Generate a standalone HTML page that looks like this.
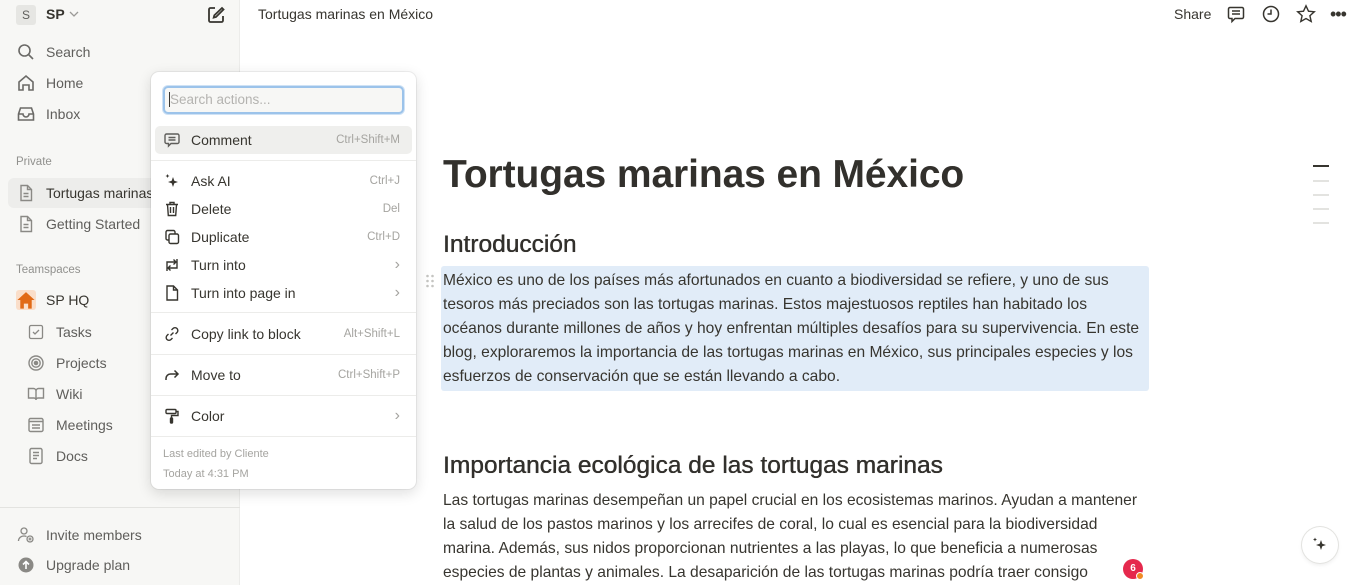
<!DOCTYPE html>
<html><head><meta charset="utf-8">
<style>
*{box-sizing:border-box;margin:0;padding:0}
body{width:1349px;height:585px;overflow:hidden;font-family:"Liberation Sans",sans-serif;background:#fff;position:relative;color:#37352f}
.sb{position:absolute;left:0;top:0;width:240px;height:585px;background:#f7f7f5;border-right:1px solid #ececea}
.it{position:absolute;left:16px;font-size:14px;color:#5f5e5b;display:flex;align-items:center;gap:10px;height:20px}
.it svg{width:20px;height:20px;flex:none}
.sec{position:absolute;left:16px;font-size:11.5px;color:#91918e}
.sub{left:26px}
.top{position:absolute;left:258px;top:6px;font-size:14px;color:#37352f}
.menu{position:absolute;left:151px;top:72px;width:265px;height:417px;background:#fff;border-radius:8px;box-shadow:0 0 0 1px rgba(15,15,15,.06),0 4px 14px rgba(15,15,15,.14)}
.srch{position:absolute;left:12px;top:14px;width:241px;height:28px;border:2px solid #9cc3ea;border-radius:5px;background:#f7f7f5;font-size:13.5px;color:#b4b3b0;padding:4px 4px;box-shadow:0 0 0 1px #cfe2f5}
.mi{position:absolute;left:4px;width:257px;height:28px;display:flex;align-items:center;font-size:14px;color:#37352f;border-radius:5px}
.mi svg{width:18px;height:18px;margin-left:8px;margin-right:10px;flex:none}
.mi .k{margin-left:auto;margin-right:12px;font-size:11.5px;color:#a5a4a0}
.mi .ar{margin-left:auto;margin-right:12px;color:#a5a4a0;font-size:16px}
.hr{position:absolute;left:0;width:265px;height:1px;background:#ececea}
h1{position:absolute;left:443px;top:153px;font-size:39px;font-weight:700;color:#32302c;letter-spacing:-.1px}
h2{position:absolute;left:443px;font-size:24.5px;font-weight:400;color:#32302c;text-shadow:0 0 .4px #32302c,.3px 0 0 #32302c}
.p{position:absolute;left:443px;font-size:15.6px;line-height:24px;color:#37352f;white-space:nowrap}
.hl{position:absolute;left:441px;top:266px;width:708px;height:125px;background:#e1ecf8;border-radius:3px}
</style></head><body>
<div class="sb">
  <div style="position:absolute;left:16px;top:5px;width:20px;height:20px;background:#e6e6e3;border-radius:3px;font-size:12px;color:#5f5e5b;text-align:center;line-height:20px">S</div>
  <div style="position:absolute;left:46px;top:6px;font-size:14px;font-weight:700;color:#37352f">SP</div>
  <svg style="position:absolute;left:69px;top:10px" width="10" height="8" viewBox="0 0 10 8" fill="none" stroke="#9b9a97" stroke-width="1.3"><path d="M1 2l4 4 4-4"/></svg>
  <svg style="position:absolute;left:206px;top:5px" width="20" height="20" viewBox="0 0 20 20" fill="none" stroke="#37352f" stroke-width="1.8"><path d="M9 3H4.5A1.5 1.5 0 0 0 3 4.5v11A1.5 1.5 0 0 0 4.5 17h11a1.5 1.5 0 0 0 1.5-1.5V11"/><path d="M16 3l1.5 1.5L10 12l-2.3.6.6-2.3z"/></svg>
  <div class="it" style="top:42px"><svg viewBox="0 0 20 20" fill="none" stroke="#6b6a67" stroke-width="1.6"><circle cx="8.5" cy="8.5" r="5.5"/><path d="M12.5 12.5l4.5 4.5"/></svg><span style="color:#5f5e5b">Search</span></div>
  <div class="it" style="top:73px"><svg viewBox="0 0 20 20" fill="none" stroke="#6b6a67" stroke-width="1.6"><path d="M3 9l7-6 7 6v8h-4v-5H7v5H3z"/></svg>Home</div>
  <div class="it" style="top:104px"><svg viewBox="0 0 20 20" fill="none" stroke="#6b6a67" stroke-width="1.6"><path d="M2.5 10l2-6h11l2 6v6h-15z M2.5 10h4.5a3 3 0 0 0 6 0h4.5"/></svg>Inbox</div>
  <div class="sec" style="top:156px">Private</div>
  <div style="position:absolute;left:8px;top:178px;width:232px;height:30px;background:#ededeb;border-radius:6px"></div>
  <div class="it" style="top:183px;color:#37352f"><svg viewBox="0 0 20 20" fill="none" stroke="#8a8985" stroke-width="1.4"><path d="M5 2.5h6.5L15.5 6.5v11h-10.5z"/><path d="M11.5 2.5v4h4M7.5 10.5h5M7.5 13.5h5"/></svg>Tortugas marinas</div>
  <div class="it" style="top:214px"><svg viewBox="0 0 20 20" fill="none" stroke="#8a8985" stroke-width="1.4"><path d="M5 2.5h6.5L15.5 6.5v11h-10.5z"/><path d="M11.5 2.5v4h4M7.5 10.5h5M7.5 13.5h5"/></svg>Getting Started</div>
  <div class="sec" style="top:264px">Teamspaces</div>
  <div class="it" style="top:290px"><span style="width:20px;height:20px;background:#fadec9;border-radius:3px;display:flex;align-items:center;justify-content:center"><svg width="14" height="14" viewBox="0 0 14 14"><path d="M1 7l6-5.5L13 7h-2v6H8.5V9.5h-3V13H3V7z" fill="#e16a16"/></svg></span><span style="color:#37352f">SP HQ</span></div>
  <div class="it sub" style="top:322px"><svg viewBox="0 0 20 20" fill="none" stroke="#8a8985" stroke-width="1.3"><rect x="3.5" y="3.5" width="13" height="13" rx="1.5"/><path d="M7 10l2 2 4-4"/></svg>Tasks</div>
  <div class="it sub" style="top:353px"><svg viewBox="0 0 20 20" fill="none" stroke="#8a8985" stroke-width="1.4"><circle cx="10" cy="10" r="7"/><circle cx="10" cy="10" r="4.2"/><circle cx="10" cy="10" r="1.6" fill="#8a8985"/></svg>Projects</div>
  <div class="it sub" style="top:384px"><svg viewBox="0 0 20 20" fill="none" stroke="#8a8985" stroke-width="1.4"><path d="M2.5 4.5h5a2.5 2.5 0 0 1 2.5 2.5v9a2 2 0 0 0-2-2h-5.5zM17.5 4.5h-5A2.5 2.5 0 0 0 10 7v9a2 2 0 0 1 2-2h5.5z"/></svg>Wiki</div>
  <div class="it sub" style="top:415px"><svg viewBox="0 0 20 20" fill="none" stroke="#8a8985" stroke-width="1.4"><rect x="3" y="3.5" width="14" height="13" rx="1.5"/><path d="M3 6.5h14M6 10h8M6 13h8"/></svg>Meetings</div>
  <div class="it sub" style="top:446px"><svg viewBox="0 0 20 20" fill="none" stroke="#8a8985" stroke-width="1.4"><rect x="4" y="2.5" width="12" height="15" rx="1.5"/><path d="M7 6.5h6M7 9.5h6M7 12.5h4"/></svg>Docs</div>
  <div style="position:absolute;left:0;top:507px;width:240px;height:1px;background:#e3e3e0"></div>
  <div class="it" style="top:525px"><svg viewBox="0 0 20 20" fill="none" stroke="#8a8985" stroke-width="1.3"><circle cx="8" cy="6" r="3"/><path d="M2.5 16c0-3 2.5-5 5.5-5 1 0 1.8.2 2.5.6"/><circle cx="14" cy="14" r="3"/><path d="M14 12.5v3M12.5 14h3"/></svg>Invite members</div>
  <div class="it" style="top:555px"><svg viewBox="0 0 20 20"><circle cx="10" cy="10" r="7.5" fill="#8a8985"/><path d="M10 14V7M7 9.5l3-3 3 3" stroke="#fff" stroke-width="1.6" fill="none"/></svg>Upgrade plan</div>
</div>

<div class="top">Tortugas marinas en México</div>
<div style="position:absolute;left:1174px;top:6px;font-size:14px;color:#37352f">Share</div>
<svg style="position:absolute;left:1226px;top:4px" width="20" height="20" viewBox="0 0 20 20" fill="none" stroke="#37352f" stroke-width="1.5"><path d="M4 3.5h12a1.5 1.5 0 0 1 1.5 1.5v8a1.5 1.5 0 0 1-1.5 1.5H9l-3 3v-3H4A1.5 1.5 0 0 1 2.5 13V5A1.5 1.5 0 0 1 4 3.5z"/><path d="M6 7h8M6 10h8"/></svg>
<svg style="position:absolute;left:1261px;top:4px" width="20" height="20" viewBox="0 0 20 20" fill="none" stroke="#37352f" stroke-width="1.5"><circle cx="10" cy="10" r="7.5"/><path d="M10 5.5V10H6.5"/></svg>
<svg style="position:absolute;left:1296px;top:4px" width="20" height="20" viewBox="0 0 20 20" fill="none" stroke="#37352f" stroke-width="1.4"><path d="M10 1.8l2.5 5.4 5.8.6-4.4 3.9 1.3 5.8L10 14.5l-5.2 3 1.3-5.8L1.7 7.8l5.8-.6z"/></svg>
<div style="position:absolute;left:1330px;top:4px;font-size:18px;color:#37352f;letter-spacing:-1px">&#8226;&#8226;&#8226;</div>

<div style="position:absolute;left:1313px;top:165px;width:16px;height:2px;background:#37352f"></div>
<div style="position:absolute;left:1313px;top:180px;width:16px;height:2px;background:#e3e3e0"></div>
<div style="position:absolute;left:1313px;top:194px;width:16px;height:2px;background:#e3e3e0"></div>
<div style="position:absolute;left:1313px;top:208px;width:16px;height:2px;background:#e3e3e0"></div>
<div style="position:absolute;left:1313px;top:222px;width:16px;height:2px;background:#e3e3e0"></div>

<h1>Tortugas marinas en México</h1>
<h2 style="top:231px">Introducción</h2>
<div class="hl"></div>
<svg style="position:absolute;left:425px;top:274px" width="10" height="14" viewBox="0 0 10 14" fill="#c4c4c1"><circle cx="2.5" cy="2" r="1.3"/><circle cx="7.5" cy="2" r="1.3"/><circle cx="2.5" cy="7" r="1.3"/><circle cx="7.5" cy="7" r="1.3"/><circle cx="2.5" cy="12" r="1.3"/><circle cx="7.5" cy="12" r="1.3"/></svg>
<div class="p" style="top:269px">México es uno de los países más afortunados en cuanto a biodiversidad se refiere, y uno de sus<br>tesoros más preciados son las tortugas marinas. Estos majestuosos reptiles han habitado los<br>océanos durante millones de años y hoy enfrentan múltiples desafíos para su supervivencia. En este<br>blog, exploraremos la importancia de las tortugas marinas en México, sus principales especies y los<br>esfuerzos de conservación que se están llevando a cabo.</div>
<h2 style="top:452px">Importancia ecológica de las tortugas marinas</h2>
<div class="p" style="top:489px">Las tortugas marinas desempeñan un papel crucial en los ecosistemas marinos. Ayudan a mantener<br>la salud de los pastos marinos y los arrecifes de coral, lo cual es esencial para la biodiversidad<br>marina. Además, sus nidos proporcionan nutrientes a las playas, lo que beneficia a numerosas<br>especies de plantas y animales. La desaparición de las tortugas marinas podría traer consigo</div>

<div style="position:absolute;left:1302px;top:527px;width:36px;height:36px;border-radius:50%;background:#fff;box-shadow:0 0 0 1px #e3e3e0,0 2px 4px rgba(0,0,0,.08)"><svg style="position:absolute;left:9px;top:9px" width="18" height="18" viewBox="0 0 18 18" fill="#37352f"><path d="M10 4l1.3 3.7L15 9l-3.7 1.3L10 14l-1.3-3.7L5 9l3.7-1.3z"/><path d="M4 1.5l.6 1.4 1.4.6-1.4.6L4 5.5l-.6-1.4L2 3.5l1.4-.6z"/></svg></div>
<div style="position:absolute;left:1123px;top:559px;width:20px;height:20px;border-radius:50%;background:#e5294d;color:#fff;font-size:10px;font-weight:700;text-align:center;line-height:20px">6</div>
<div style="position:absolute;left:1136px;top:572px;width:8px;height:8px;border-radius:50%;background:#f08a24;border:1px solid #fff"></div>

<div class="menu">
  <div class="srch"><span style="border-left:1px solid #37352f;padding-left:0">Search actions...</span></div>
  <div class="mi" style="top:54px;background:#efefed"><svg viewBox="0 0 18 18" fill="none" stroke="#5f5e5b" stroke-width="1.4"><path d="M3.5 3h11A1.5 1.5 0 0 1 16 4.5v6.5a1.5 1.5 0 0 1-1.5 1.5H8l-2.5 2.5v-2.5H3.5A1.5 1.5 0 0 1 2 11V4.5A1.5 1.5 0 0 1 3.5 3z"/><path d="M5.5 6.5h7M5.5 9h7"/></svg>Comment<span class="k">Ctrl+Shift+M</span></div>
  <div class="hr" style="top:88px"></div>
  <div class="mi" style="top:95px"><svg viewBox="0 0 18 18" fill="#37352f"><path d="M10 5l1.3 3.7L15 10l-3.7 1.3L10 15l-1.3-3.7L5 10l3.7-1.3z"/><path d="M4.5 2l.6 1.4 1.4.6-1.4.6-.6 1.4-.6-1.4L2.5 4l1.4-.6z"/></svg>Ask AI<span class="k">Ctrl+J</span></div>
  <div class="mi" style="top:123px"><svg viewBox="0 0 18 18" fill="none" stroke="#37352f" stroke-width="1.4"><path d="M3 4.5h12M7 4.5V2.5h4v2M4.5 4.5l.8 11h7.4l.8-11M7.5 7v6M10.5 7v6"/></svg>Delete<span class="k">Del</span></div>
  <div class="mi" style="top:151px"><svg viewBox="0 0 18 18" fill="none" stroke="#37352f" stroke-width="1.4"><rect x="6" y="6" width="9.5" height="9.5" rx="1.5"/><path d="M12 6V4a1.5 1.5 0 0 0-1.5-1.5h-6A1.5 1.5 0 0 0 3 4v6.5A1.5 1.5 0 0 0 4.5 12H6"/></svg>Duplicate<span class="k">Ctrl+D</span></div>
  <div class="mi" style="top:179px"><svg viewBox="0 0 18 18" fill="none" stroke="#37352f" stroke-width="1.4"><path d="M4 15V6h9M10.5 3.5L13 6l-2.5 2.5M14 3v9H5M7.5 14.5L5 12l2.5-2.5"/></svg>Turn into<span class="ar">›</span></div>
  <div class="mi" style="top:207px"><svg viewBox="0 0 18 18" fill="none" stroke="#37352f" stroke-width="1.4"><path d="M4 2h6.5L14.5 6v10H4z M10.5 2v4h4"/></svg>Turn into page in<span class="ar">›</span></div>
  <div class="hr" style="top:240px"></div>
  <div class="mi" style="top:248px"><svg viewBox="0 0 18 18" fill="none" stroke="#37352f" stroke-width="1.4"><path d="M7.5 10.5l3-3M8.5 5l1.5-1.5a2.8 2.8 0 0 1 4 4L12.5 9M9.5 13l-1.5 1.5a2.8 2.8 0 0 1-4-4L5.5 9"/></svg>Copy link to block<span class="k">Alt+Shift+L</span></div>
  <div class="hr" style="top:282px"></div>
  <div class="mi" style="top:289px"><svg viewBox="0 0 18 18" fill="none" stroke="#37352f" stroke-width="1.5"><path d="M3 14v-1.5A4.5 4.5 0 0 1 7.5 8H15M11.5 4.5L15 8l-3.5 3.5"/></svg>Move to<span class="k">Ctrl+Shift+P</span></div>
  <div class="hr" style="top:323px"></div>
  <div class="mi" style="top:330px"><svg viewBox="0 0 18 18" fill="none" stroke="#37352f" stroke-width="1.4"><rect x="3" y="2.5" width="10" height="4" rx="1"/><path d="M13 4.5h2v4H8.5v2.5"/><rect x="7.5" y="11" width="2" height="5" rx=".8" fill="#37352f"/></svg>Color<span class="ar">›</span></div>
  <div class="hr" style="top:364px"></div>
  <div style="position:absolute;left:12px;top:376px;font-size:11px;color:#a5a4a0">Last edited by Cliente</div>
  <div style="position:absolute;left:12px;top:396px;font-size:11px;color:#a5a4a0">Today at 4:31 PM</div>
</div>
</body></html>
